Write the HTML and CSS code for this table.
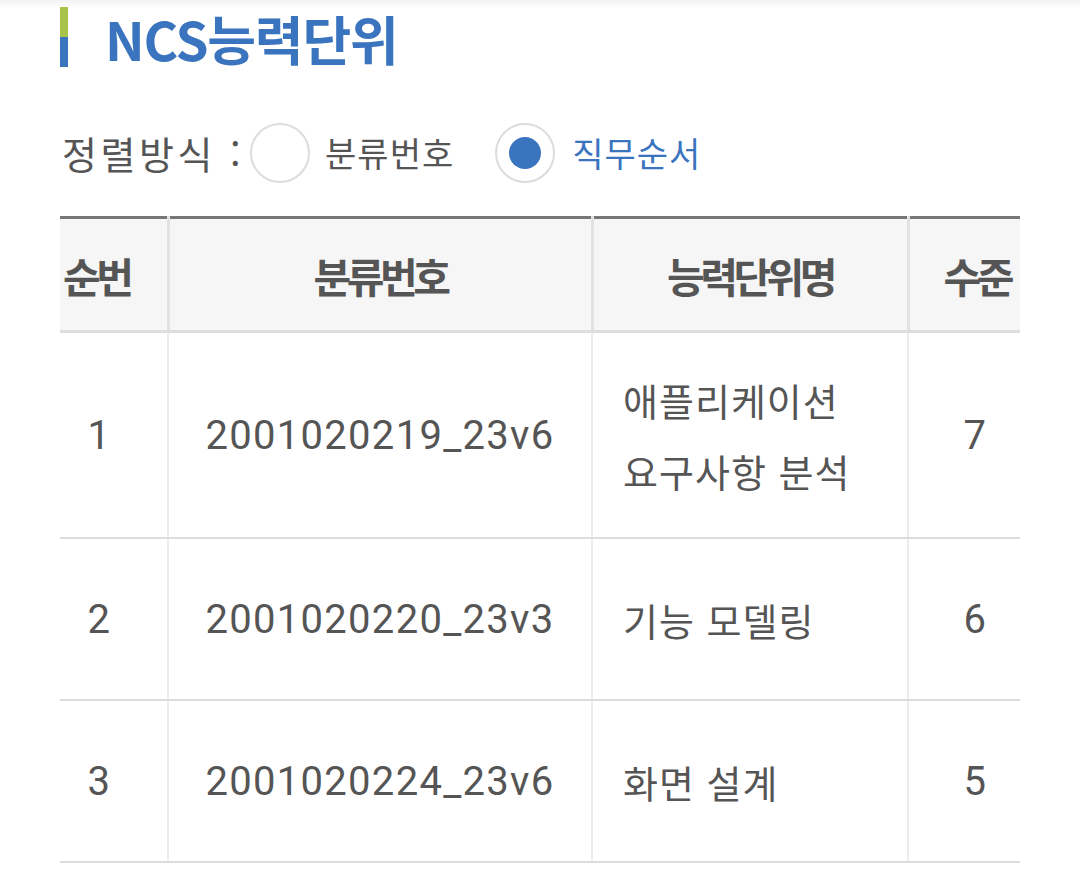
FILE: index.html
```html
<!DOCTYPE html>
<html lang="ko">
<head>
<meta charset="utf-8">
<title>NCS능력단위</title>
<link rel="stylesheet" href="styles.css">
</head>
<body>
<div class="page">
  <div class="title">
    <span class="title-bar"></span>
    <h2 class="title-text">NCS능력단위</h2>
  </div>

  <div class="sort">
    <span class="sort-label">정렬방식 :</span>
    <label class="opt">
      <span class="radio"></span>
      <span class="opt-text">분류번호</span>
    </label>
    <label class="opt opt-on">
      <span class="radio"><span class="radio-dot"></span></span>
      <span class="opt-text">직무순서</span>
    </label>
  </div>

  <table class="grid">
    <colgroup>
      <col class="c1"><col class="c2"><col class="c3"><col class="c4">
    </colgroup>
    <thead>
      <tr>
        <th class="col-no">순번</th>
        <th>분류번호</th>
        <th>능력단위명</th>
        <th class="col-lv">수준</th>
      </tr>
    </thead>
    <tbody>
      <tr class="row-tall">
        <td class="col-no num">1</td>
        <td class="num">2001020219_23v6</td>
        <td class="name">애플리케이션<br>요구사항 분석</td>
        <td class="col-lv num">7</td>
      </tr>
      <tr>
        <td class="col-no num">2</td>
        <td class="num">2001020220_23v3</td>
        <td class="name">기능 모델링</td>
        <td class="col-lv num">6</td>
      </tr>
      <tr>
        <td class="col-no num">3</td>
        <td class="num">2001020224_23v6</td>
        <td class="name">화면 설계</td>
        <td class="col-lv num">5</td>
      </tr>
    </tbody>
  </table>
</div>
</body>
</html>
```

FILE: styles.css
```css
html, body {
  margin: 0;
  padding: 0;
}

body {
  background: linear-gradient(#f2f2f2, #ffffff 8px) no-repeat;
  background-color: #fff;
  font-family: Roboto, "Noto Sans CJK KR", sans-serif;
  color: #555;
}

.page {
  padding: 0 0 0 60px;
  width: 960px;
}

/* title */
.title {
  display: flex;
  align-items: flex-start;
  gap: 37px;
}

.title-bar {
  width: 8px;
  height: 60px;
  margin-top: 7px;
  background: linear-gradient(#a9c24a 0 50%, #3b74bf 50% 100%);
  flex: none;
}

.title-text {
  margin: 0;
  padding-right: 4px;
  font-family: "Noto Sans CJK KR", sans-serif;
  font-weight: 700;
  font-size: 53px;
  letter-spacing: -1.2px;
  line-height: 77px;
  color: #3a74bf;
}

/* sort options */
.sort {
  display: flex;
  align-items: center;
  margin-top: 46px;
  height: 60px;
}

.sort-label {
  font-family: "Noto Sans CJK KR", sans-serif;
  font-size: 38px;
  letter-spacing: 3.5px;
  line-height: 60px;
  color: #555;
  margin-left: 2px;
  margin-right: 6px;
}

.opt {
  display: flex;
  align-items: center;
  gap: 15px;
  margin-right: 41px;
}

.opt-on {
  gap: 17px;
}

.radio {
  box-sizing: border-box;
  width: 60px;
  height: 60px;
  border: 2px solid #dcdcdc;
  border-radius: 50%;
  background: #fff;
  display: flex;
  align-items: center;
  justify-content: center;
  flex: none;
}

.radio-dot {
  width: 32px;
  height: 32px;
  border-radius: 50%;
  background: #3a74bf;
}

.opt-text {
  font-family: "Noto Sans CJK KR", sans-serif;
  font-size: 34px;
  letter-spacing: 1px;
  line-height: 60px;
  color: #555;
}

.opt-on .opt-text {
  color: #3a74bf;
}

/* table */
.grid {
  margin-top: 33px;
  width: 960px;
  table-layout: fixed;
  border-collapse: collapse;
  border-top: 3px solid #777;
}

.c1 { width: 108px; }
.c2 { width: 424px; }
.c3 { width: 316px; }
.c4 { width: 112px; }

.grid th {
  height: 111px;
  padding: 0;
  background: #f6f6f6;
  font-family: "Noto Sans CJK KR", sans-serif;
  font-weight: 700;
  font-size: 41px;
  letter-spacing: -4.5px;
  color: #555;
  text-align: center;
  vertical-align: middle;
  border-left: 3px solid #e2e2e2;
  border-bottom: 3px solid #dedede;
}

.grid td {
  height: 160px;
  padding: 0;
  text-align: center;
  vertical-align: middle;
  border-left: 2px solid #ececec;
  border-bottom: 2px solid #dcdcdc;
  color: #555;
}

.grid th:first-child,
.grid td:first-child {
  border-left: none;
}

.grid .row-tall td {
  height: 204px;
}

.grid .col-no {
  padding-right: 28px;
}

.grid .col-lv {
  padding-left: 22px;
}

.grid th.col-no {
  padding-right: 34px;
}

.grid th.col-lv {
  padding-left: 24px;
}

.num {
  font-family: Roboto, "Noto Sans CJK KR", sans-serif;
  font-size: 40px;
  letter-spacing: 1.3px;
}

.grid .name {
  text-align: left;
  padding-left: 30px;
  font-family: "Noto Sans CJK KR", sans-serif;
  font-size: 38px;
  letter-spacing: 1px;
  line-height: 71px;
}
```
